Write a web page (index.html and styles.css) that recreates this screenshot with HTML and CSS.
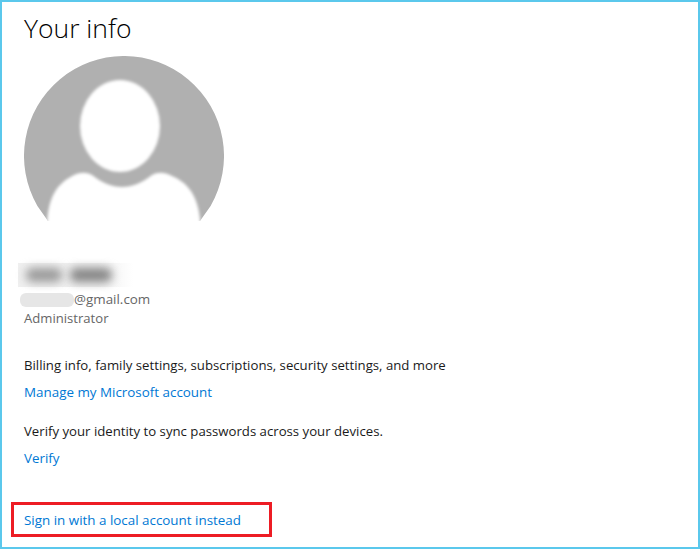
FILE: index.html
```html
<!DOCTYPE html>
<html lang="en">
<head>
<meta charset="utf-8">
<title>Your info</title>
<link rel="stylesheet" href="styles.css">
</head>
<body>
<main class="frame">
  <h1 class="title">Your info</h1>
  <svg class="avatar" width="200" height="200" viewBox="0 0 200 200" aria-hidden="true">
    <defs>
      <filter id="soft" x="-10%" y="-10%" width="120%" height="120%"><feGaussianBlur stdDeviation="1.5"/></filter>
      <clipPath id="disc"><path d="M13.4 150 A100 100 0 1 1 186.6 150 L176 165 L24 165 Z"/></clipPath>
    </defs>
    <g clip-path="url(#disc)">
      <rect width="200" height="200" fill="#b0b0b0"/>
      <g filter="url(#soft)" fill="#fff">
        <ellipse cx="96" cy="70" rx="40" ry="46"/>
        <path d="M23 175 C23 142 32 128 50 119 C57 116 62 116 68 119 C78 127 88 131 98 131 C108 131 118 127 128 119 C134 116 140 116 148 120 C166 128 176 142 177 175 L177 240 L23 240 Z"/>
      </g>
    </g>
  </svg>
  <div class="identity">
    <div class="name-blur" aria-hidden="true"><span class="blob"></span><span class="blob blob-b"></span></div>
    <p class="meta"><span class="mask"></span>@gmail.com</p>
    <p class="meta meta-role">Administrator</p>
  </div>
  <section class="block block-first">
    <p class="text">Billing info, family settings, subscriptions, security settings, and more</p>
    <a class="link" href="#">Manage my Microsoft account</a>
  </section>
  <section class="block block-second">
    <p class="text">Verify your identity to sync passwords across your devices.</p>
    <a class="link" href="#">Verify</a>
  </section>
  <div class="local">
    <a class="link" href="#">Sign in with a local account instead</a>
    <span class="highlight"></span>
  </div>
</main>
</body>
</html>
```
FILE: styles.css
```css
* { box-sizing: border-box; }
html, body { margin: 0; height: 100%; background: #fff; }
body { font-family: "Open Sans", "Noto Sans", sans-serif; }
.frame {
  width: 700px;
  height: 549px;
  border: 2px solid #5bc8ec;
  padding: 8px 22px 0;
  display: flex;
  flex-direction: column;
  overflow: hidden;
}
.title {
  margin: 0;
  font-weight: 300;
  font-size: 26.5px;
  line-height: 36px;
  color: #000;
  height: 46px;
}
.avatar { display: block; flex: none; }
.identity { margin-top: 7px; display: flex; flex-direction: column; }
.name-blur {
  margin-left: -6px;
  width: 115px;
  height: 24px;
  margin-bottom: 3px;
  display: flex;
  gap: 8px;
  padding: 5px 0 0 8px;
  background: linear-gradient(to right, #f0f0f0 70%, #fff);
}
.blob { width: 36px; height: 14px; background: #9a9a9a; border-radius: 6px; filter: blur(5px); }
.blob-b { width: 42px; background: #858585; }
.meta { margin: 0; font-size: 13.4px; line-height: 19px; color: #666; display: flex; align-items: center; }
.meta-role { font-size: 13.1px; }
.mask { width: 54px; height: 14px; margin-left: -4px; background: #e6e6e6; border-radius: 6px; }
.block { display: flex; flex-direction: column; align-items: flex-start; }
.block-first { margin-top: 28px; }
.block-second { margin-top: 20px; }
.text { margin: 0 0 8px; font-size: 13.2px; line-height: 19px; color: #1a1a1a; }
.link { font-size: 13.4px; line-height: 19px; color: #0078d4; text-decoration: none; }
.local { position: relative; margin-top: 40px; align-self: flex-start; }
.highlight {
  position: absolute;
  left: -13px;
  top: -6px;
  width: 261px;
  height: 35px;
  border: 3px solid #ed1c24;
}
```
